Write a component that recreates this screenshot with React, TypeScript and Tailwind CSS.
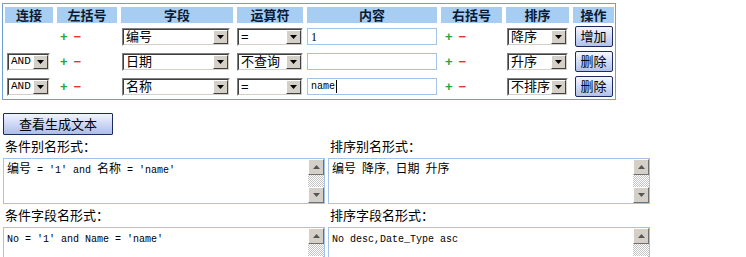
import React from 'react';

const rows = [
  { conn: '', field: '编号', op: '=', value: '1', caret: false, sort: '降序', action: '增加' },
  { conn: 'AND', field: '日期', op: '不查询', value: '', caret: false, sort: '升序', action: '删除' },
  { conn: 'AND', field: '名称', op: '=', value: 'name', caret: true, sort: '不排序', action: '删除' },
];

const heads = ['连接', '左括号', '字段', '运算符', '内容', '右括号', '排序', '操作'];

const cols = 'grid grid-cols-[48px_60px_112px_66px_130px_61px_63px_41px] gap-x-[4px]';

function Arrow({ up = false, color = '#000' }: { up?: boolean; color?: string }) {
  return (
    <svg width="7" height="4" viewBox="0 0 7 4">
      <path d={up ? 'M0 4h7L3.5 0z' : 'M0 0h7L3.5 4z'} fill={color} />
    </svg>
  );
}

function Select({ text, className, mono = false }: { text: string; className: string; mono?: boolean }) {
  return (
    <div className={`flex h-[18px] border border-t-[#808080] border-l-[#808080] border-r-white border-b-white ${className}`}>
      <div className="flex min-w-0 flex-1 border border-t-[#404040] border-l-[#404040] border-r-[#d4d0c8] border-b-[#d4d0c8] bg-white">
        <span
          className={`flex flex-1 items-center overflow-hidden whitespace-nowrap pl-[2px] leading-none text-black ${
            mono ? "font-['Liberation_Mono',monospace] text-[11px]" : 'text-[13px]'
          }`}
        >
          {text}
        </span>
        <div className="flex w-[15px] shrink-0 items-center justify-center border border-t-white border-l-white border-r-[#404040] border-b-[#404040] bg-[#d4d0c8]">
          <Arrow />
        </div>
      </div>
    </div>
  );
}

function PlusMinus({ className }: { className: string }) {
  return (
    <div className={`flex h-full items-center gap-[6px] text-[13px] font-bold leading-none ${className}`}>
      <span className="text-[#1fa83a]">+</span>
      <span className="text-[#e8322e]">−</span>
    </div>
  );
}

function ScrollBox({ children }: { children: React.ReactNode }) {
  return (
    <div className="flex h-[46px] border border-[#a3c4e6] bg-white">
      <div className="flex-1 whitespace-nowrap px-[3px] pt-[3px] leading-[14px] text-black">{children}</div>
      <div className="flex w-[16px] flex-col">
        <div className="flex h-[16px] items-center justify-center border border-t-white border-l-white border-r-[#707070] border-b-[#707070] bg-[#d4d0c8]">
          <Arrow up color="#555" />
        </div>
        <div className="flex-1 bg-[repeating-conic-gradient(#c4c4c4_0%_25%,#ffffff_0%_50%)] bg-[length:2px_2px]" />
        <div className="flex h-[16px] items-center justify-center border border-t-white border-l-white border-r-[#707070] border-b-[#707070] bg-[#d4d0c8]">
          <Arrow color="#555" />
        </div>
      </div>
    </div>
  );
}

const mono = "font-['Liberation_Mono',monospace] text-[10px]";

export default function App() {
  return (
    <div className="h-[257px] w-[746px] overflow-hidden bg-white font-['Liberation_Sans','Noto_Sans_CJK_SC',sans-serif] text-[12px] text-black">
      {/* condition table */}
      <div className="ml-[2px] mt-[3px] w-[614px] border border-[#6c9fd2] pl-[2px] pt-[3px]">
        <div className={`${cols} h-[16px]`}>
          {heads.map((h) => (
            <div key={h} className="flex items-center justify-center bg-[#a7cdf2] text-[13px] font-bold leading-none text-[#0c1a33]">
              {h}
            </div>
          ))}
        </div>
        <div className="mt-[1px]">
          {rows.map((r, i) => (
            <div key={i} className={`${cols} h-[25px] items-center`}>
              <div>{r.conn && <Select text={r.conn} mono className="ml-[2px] w-[43px]" />}</div>
              <PlusMinus className="pl-[3px]" />
              <Select text={r.field} className="ml-[1px] w-[108px]" />
              <Select text={r.op} className="w-[66px]" />
              <div className={`flex h-[17px] w-[130px] items-center border border-[#a3c4e6] bg-white pl-[3px] text-black ${r.value === '1' ? "font-['Liberation_Serif',serif] text-[12px]" : mono}`}>
                {r.value}
                {r.caret && <span className="ml-[1px] h-[13px] w-[1px] bg-black" />}
              </div>
              <PlusMinus className="pl-[4px]" />
              <Select text={r.sort} className="ml-[1px] w-[61px]" />
              <div className="flex justify-center">
                <button className="h-[21px] w-[38px] rounded-[2px] border border-[#1c2b5e] bg-linear-to-b from-[#f6f7ff] to-[#b1c1ec] text-[13px] leading-none text-black">
                  {r.action}
                </button>
              </div>
            </div>
          ))}
        </div>
      </div>

      {/* generated text */}
      <div className="mt-[13px] pl-[3px]">
        <button className="h-[22px] w-[110px] rounded-[1px] border border-[#1c2b5e] bg-linear-to-b from-[#f1f3fe] to-[#adbdea] text-[13px] leading-none text-black">
          查看生成文本
        </button>
        <div className="grid grid-cols-[322px_322px] gap-x-[3px]">
          <div>
            <div className="flex h-[23px] items-center pl-[2px] text-[13px]">条件别名形式：</div>
            <ScrollBox>
              <span className="text-[12px]">编号</span>
              <span className={mono}> = '1' and </span>
              <span className="text-[12px]">名称</span>
              <span className={mono}> = 'name'</span>
            </ScrollBox>
            <div className="flex h-[23px] items-center pl-[2px] text-[13px]">条件字段名形式：</div>
            <ScrollBox>
              <span className={mono}>No = '1' and Name = 'name'</span>
            </ScrollBox>
          </div>
          <div>
            <div className="flex h-[23px] items-center pl-[2px] text-[13px]">排序别名形式：</div>
            <ScrollBox>
              <span className="text-[12px]">编号</span>
              <span className={mono}> </span>
              <span className="text-[12px]">降序,</span>
              <span className={mono}> </span>
              <span className="text-[12px]">日期</span>
              <span className={mono}> </span>
              <span className="text-[12px]">升序</span>
            </ScrollBox>
            <div className="flex h-[23px] items-center pl-[2px] text-[13px]">排序字段名形式：</div>
            <ScrollBox>
              <span className={mono}>No desc,Date_Type asc</span>
            </ScrollBox>
          </div>
        </div>
      </div>
    </div>
  );
}
